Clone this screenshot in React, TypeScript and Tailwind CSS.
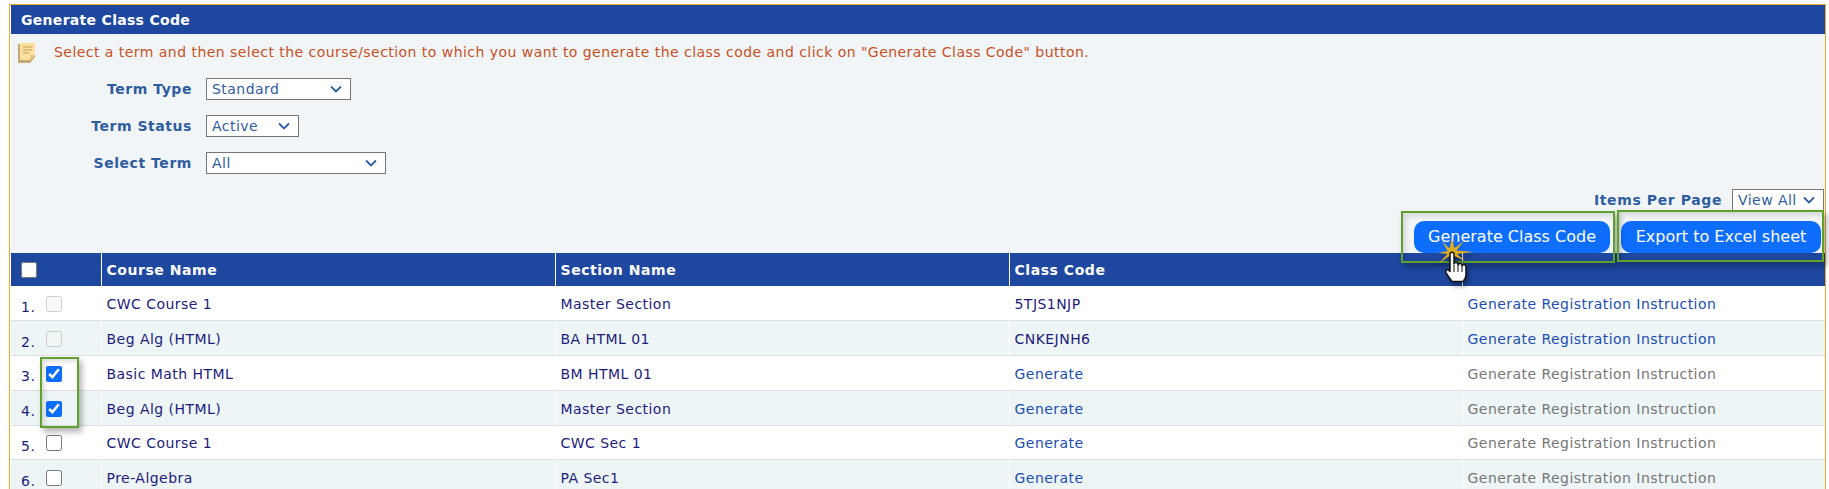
import React from "react";

const rows = [
  { n: 1, course: "CWC Course 1", section: "Master Section", code: "5TJS1NJP", state: "done" },
  { n: 2, course: "Beg Alg (HTML)", section: "BA HTML 01", code: "CNKEJNH6", state: "done" },
  { n: 3, course: "Basic Math HTML", section: "BM HTML 01", code: "", state: "checked" },
  { n: 4, course: "Beg Alg (HTML)", section: "Master Section", code: "", state: "checked" },
  { n: 5, course: "CWC Course 1", section: "CWC Sec 1", code: "", state: "open" },
  { n: 6, course: "Pre-Algebra", section: "PA Sec1", code: "", state: "open" },
];

const filters = [
  { label: "Term Type", value: "Standard", width: "w-[145px]" },
  { label: "Term Status", value: "Active", width: "w-[93px]" },
  { label: "Select Term", value: "All", width: "w-[180px]" },
];

const Chevron = () => (
  <svg className="h-[8px] w-[12px] shrink-0 text-[#2f5d9f]" viewBox="0 0 12 8" fill="none" stroke="currentColor" strokeWidth={1.8}>
    <path d="M1 1.5l5 5 5-5" />
  </svg>
);

const FakeSelect = ({ value, width }: { value: string; width: string }) => (
  <div className={`flex h-[22px] items-center justify-between border border-[#767676] bg-white pl-[5px] pr-[8px] text-[#2f5d9f] ${width}`}>
    <span>{value}</span>
    <Chevron />
  </div>
);

const NoteIcon = () => (
  <svg width="18" height="20" viewBox="0 0 18 20" className="shrink-0">
    <path d="M0 1h17v13l-5 6H0z" fill="#c9a873" />
    <path d="M2 0h15v12l-5 5H2z" fill="#fbe0a0" />
    <path d="M12 17v-5h5z" fill="#e9c98a" />
    <path d="M5 4h9M5 7h9M5 10h6" stroke="#c99a4a" strokeWidth={1.2} />
  </svg>
);

const HandCursor = () => (
  <svg width="44" height="50" viewBox="0 0 44 50" className="absolute left-[1436px] top-[238px] drop-shadow-[2px_4px_2px_rgba(0,0,0,0.35)]">
    <polygon
      points="16,0 18.500,10 28,3 20.500,12.500 38,14 21,16 29,23 18.500,18 16,27 13.500,18 3,25 11.500,16 2,15 11.500,13 6,3 13.500,10.500"
      fill="#e0ac20"
    />
    <path
      d="M14 16c0-2.500 4-2.500 4 0v10c0-2 4-2 4 0v1c0-2 4-2 4 0v1c0-2 4-1.500 4 .5v8c0 3-1 5-3 7H16c-2-3-4-5-6-9-1-3 2-4 4-1z"
      fill="#fff"
      stroke="#111"
      strokeWidth={1.5}
      strokeLinejoin="round"
    />
    <path d="M18 27v7M22 27v7M26 28v6" stroke="#111" strokeWidth={1} />
  </svg>
);

const marker = "absolute border-2 border-[#5fa12b] shadow-[3px_4px_6px_rgba(0,0,0,0.3),inset_3px_3px_5px_rgba(0,0,0,0.12)]";

export default function App() {
  return (
    <div className="relative h-[489px] w-[1829px] overflow-hidden bg-white pl-[9px] pr-[3px] pt-[4px] font-['DejaVu_Sans',sans-serif] text-[14px] tracking-[0.46px]">
      <div className="h-[485px] border-x border-t border-[#f0a92a] pl-px">
        <div className="flex h-[29px] items-center bg-[#1e47a0] pl-[10px] pt-px font-bold tracking-[0.3px] text-white">
          Generate Class Code
        </div>
        <div className="h-[219px] bg-[#f1f5f7]">
          <div className="flex items-center gap-[18px] pl-[7px] pt-[8px] text-[#c8501e]">
            <NoteIcon />
            <span>Select a term and then select the course/section to which you want to generate the class code and click on "Generate Class Code" button.</span>
          </div>
          <div className="flex flex-col gap-[15px] pt-[15px]">
            {filters.map((f) => (
              <div key={f.label} className="flex items-center gap-[14px]">
                <span className="w-[181px] text-right font-bold tracking-[0.55px] text-[#2f5d9f]">{f.label}</span>
                <FakeSelect value={f.value} width={f.width} />
              </div>
            ))}
          </div>
          <div className="flex items-center justify-end gap-[10px] pr-px pt-[15px]">
            <span className="font-bold tracking-[0.6px] text-[#2f5d9f]">Items Per Page</span>
            <FakeSelect value="View All" width="w-[92px]" />
          </div>
          <div className="flex justify-end gap-[11px] pr-[4px] pt-[10px]">
            <button className="h-[32px] w-[196px] rounded-[10px] bg-[#0d6efd] text-[16px] tracking-normal text-white">Generate Class Code</button>
            <button className="h-[32px] w-[200px] rounded-[10px] bg-[#0d6efd] text-[16px] tracking-normal text-white">Export to Excel sheet</button>
          </div>
        </div>

        <table className="w-full table-fixed border-collapse">
          <colgroup>
            <col className="w-[90px]" />
            <col className="w-[454px]" />
            <col className="w-[454px]" />
            <col className="w-[453px]" />
            <col />
          </colgroup>
          <thead>
            <tr className="h-[33px] bg-[#1e47a0] text-left font-bold tracking-[0.55px] text-white">
              <th className="border-r border-white pl-[10px]">
                <input type="checkbox" className="block h-4 w-4" />
              </th>
              <th className="border-r border-white pl-[5px] pt-px">Course Name</th>
              <th className="border-r border-white pl-[5px] pt-px">Section Name</th>
              <th className="border-r border-white pl-[5px] pt-px">Class Code</th>
              <th />
            </tr>
          </thead>
          <tbody>
            {rows.map((r) => (
              <tr key={r.n} className={`h-[34.75px] border-b border-[#d9dfe2] ${r.n % 2 === 0 ? "bg-[#edf5f6]" : "bg-white"} text-[#1c1c7c]`}>
                <td className="border-r border-white">
                  <div className="flex items-center pl-[10px]">
                    <span className="w-[25px] pt-[8px]">{r.n}.</span>
                    <input
                      type="checkbox"
                      disabled={r.state === "done"}
                      defaultChecked={r.state === "checked"}
                      className="mt-[2px] block h-4 w-4 accent-[#0d6efd]"
                    />
                  </div>
                </td>
                <td className="border-r border-white pl-[5px] pt-[3px]">{r.course}</td>
                <td className="border-r border-white pl-[5px] pt-[3px]">{r.section}</td>
                <td className="border-r border-white pl-[5px] pt-[3px]">
                  {r.code ? r.code : <a className="text-[#1b4db3]">Generate</a>}
                </td>
                <td className={`pl-[5px] pt-[3px] ${r.code ? "text-[#1b4db3]" : "text-[#777777]"}`}>Generate Registration Instruction</td>
              </tr>
            ))}
          </tbody>
        </table>
      </div>

      <div className={`${marker} left-[1401px] top-[211px] h-[52px] w-[214px]`} />
      <div className={`${marker} left-[1617px] top-[210px] h-[52px] w-[207px]`} />
      <div className={`${marker} left-[40px] top-[357px] h-[71px] w-[39px]`} />
      <HandCursor />
    </div>
  );
}
